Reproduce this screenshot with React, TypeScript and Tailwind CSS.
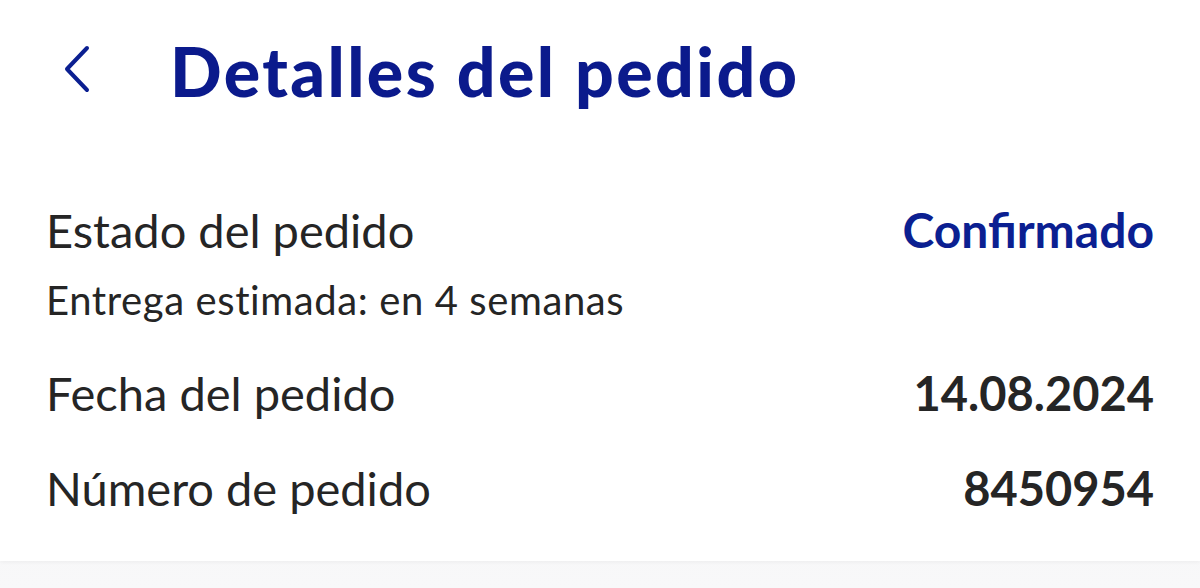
import React from "react";

const rows = [
  { label: "Fecha del pedido", value: "14.08.2024", mt: "mt-[50px]" },
  { label: "Número de pedido", value: "8450954", mt: "mt-[48px]" },
];

export default function App() {
  return (
    <div
      className="w-[1200px] h-[588px] bg-gradient-to-b from-[#eeeef0] to-[#f8f8f9] overflow-hidden"
      style={{ fontFamily: "Lato, 'Noto Sans', sans-serif" }}
    >
      <div className="bg-white h-[561px] shadow-[0_1px_4px_rgba(0,0,0,0.05)] flex flex-col">
        {/* header */}
        <div className="flex items-start h-[150px] pt-[37px]">
          <button className="w-[170px] pl-[62px] mt-[8px] flex items-start">
            <svg width="30" height="48" viewBox="0 0 30 48" fill="none">
              <path
                d="M25 3 L5 24 L25 45"
                stroke="#0b1f91"
                strokeWidth="4"
                strokeLinecap="round"
                strokeLinejoin="round"
              />
            </svg>
          </button>
          <h1 className="text-[68px] leading-none font-black text-[#0b1a8c] tracking-[2.4px]">
            Detalles del pedido
          </h1>
        </div>

        {/* body */}
        <div className="px-[46px] flex flex-col text-[#252525]">
          <div className="flex justify-between items-baseline mt-[56px]">
            <span className="text-[47px] leading-none">Estado del pedido</span>
            <span className="text-[48px] leading-none font-bold text-[#0b1f91]">Confirmado</span>
          </div>
          <div className="text-[40px] leading-none mt-[26px] tracking-[0.6px]">
            Entrega estimada: en 4 semanas
          </div>
          {rows.map((r) => (
            <div key={r.label} className={`flex justify-between items-baseline ${r.mt}`}>
              <span className="text-[47px] leading-none">{r.label}</span>
              <span className="text-[47px] leading-none font-bold">{r.value}</span>
            </div>
          ))}
        </div>
      </div>
    </div>
  );
}
